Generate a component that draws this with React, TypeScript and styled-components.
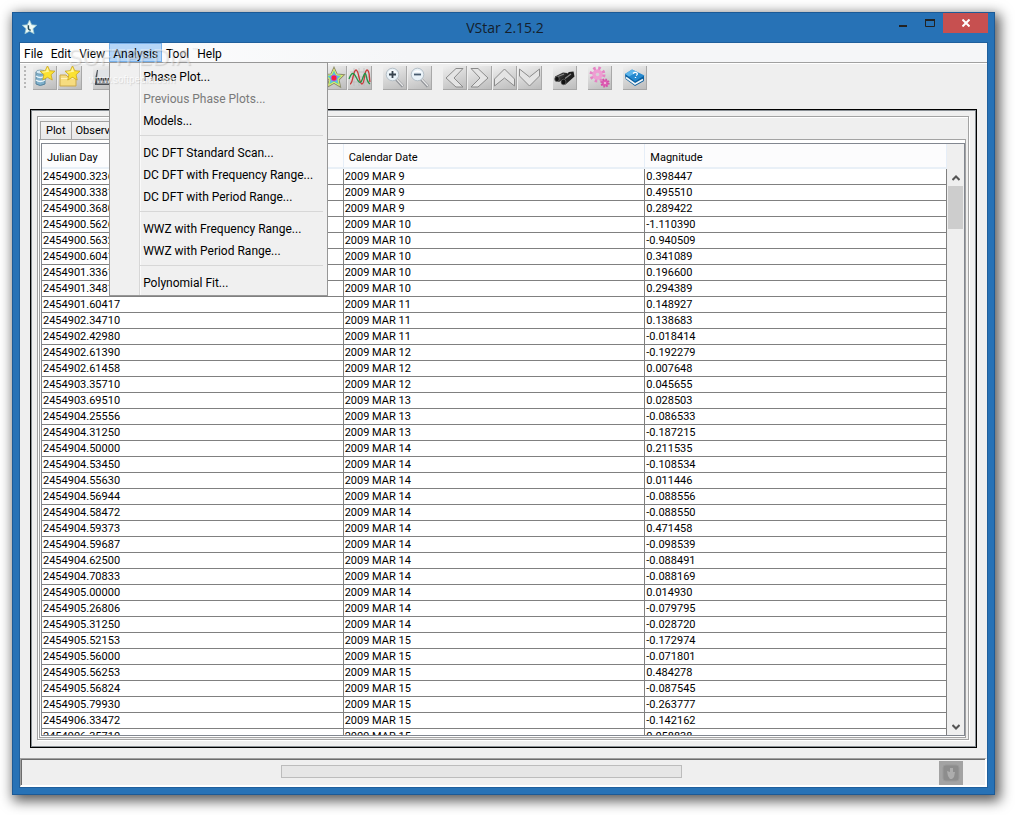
import React from "react";
import styled, { createGlobalStyle } from "styled-components";

const GlobalStyle = createGlobalStyle`
  *, *::before, *::after { box-sizing: border-box; }
  html, body { margin: 0; background: #fff; }
  body { font-family: Roboto, "Noto Sans", sans-serif; font-size: 12px; color: #000; }
  button { font: inherit; color: inherit; padding: 0; border: 0; background: none; }
`;

const Desktop = styled.div`
  display: flex;
  height: 100vh;
  min-height: 480px;
  padding: 12px 20px 20px 12px;
`;

const Window = styled.main`
  flex: 1;
  min-width: 0;
  display: flex;
  flex-direction: column;
  background: #2772b6;
  border: 1px solid #1c5a96;
  box-shadow: 3px 4px 12px 2px rgba(0, 0, 0, 0.65);
`;

const TitleBar = styled.header`
  display: grid;
  grid-template-columns: 1fr auto 1fr;
  height: 29px;
  padding: 0 6px 0 9px;
`;

const AppIcon = styled.svg`
  width: 15px;
  height: 15px;
  margin-top: 7px;
`;

const Title = styled.h1`
  margin: 0;
  font-family: "Open Sans", sans-serif;
  font-size: 14px;
  line-height: 30px;
  font-weight: 400;
  color: #14202c;
`;

const Controls = styled.div`
  display: flex;
  justify-content: flex-end;
`;

const ControlButton = styled.button<{ $close?: boolean }>`
  width: ${(p) => (p.$close ? 45 : 27)}px;
  height: 20px;
  display: flex;
  align-items: center;
  justify-content: center;
  background: ${(p) => (p.$close ? "#c75050" : "transparent")};
`;

const Client = styled.div`
  flex: 1;
  min-height: 0;
  margin: 0 6px 6px;
  border: 1px solid #1f5f9c;
  background: #efefef;
  display: flex;
  flex-direction: column;
`;

const MenuBar = styled.nav`
  position: relative;
  display: flex;
  height: 20px;
  background: linear-gradient(90deg, #fff, #f5f6f8 40%);
  border-bottom: 1px solid #a0a0a0;
  box-shadow: 0 1px 0 #fff;
`;

const MenuSlot = styled.div`
  position: relative;
  display: flex;
`;

const MenuTitle = styled.button<{ $open?: boolean }>`
  padding: 2px 4px 0;
  line-height: 18px;
  background: ${(p) => (p.$open ? "#b5d6f8" : "transparent")};
  box-shadow: ${(p) => (p.$open ? "inset 0 0 0 1px #77b0ea" : "none")};
`;

const Popup = styled.div`
  position: absolute;
  z-index: 2;
  top: 19px;
  left: 0;
  width: 219px;
  padding: 3px 0 1px;
  background: linear-gradient(90deg, transparent 29px, #d7d7d7 29px, #d7d7d7 30px, #fafafa 30px, #fafafa 31px, transparent 31px) #f0f0f0;
  border: 1px solid #979797;
`;

const PopupItem = styled.button`
  display: block;
  width: 100%;
  height: 22px;
  padding-left: 33px;
  text-align: left;
  white-space: nowrap;
  line-height: 22px;
  &:disabled { color: #7a7a7a; }
`;

const PopupRule = styled.hr`
  height: 1px;
  margin: 3px 4px 6px 30px;
  border: 0;
  background: #d7d7d7;
`;

const Watermark = styled.div`
  position: absolute;
  z-index: 3;
  top: 4px;
  left: 48px;
  pointer-events: none;
  font: 22px/22px "DejaVu Sans", sans-serif;
  color: rgba(255, 255, 255, 0.4);
  text-shadow: 1px 1px 1px rgba(90, 90, 90, 0.2);
  sup {
    font-size: 8px;
    line-height: 8px;
    vertical-align: top;
  }
`;

const WatermarkLink = styled.div`
  padding-left: 21px;
  font: 10px/22px "Liberation Sans", sans-serif;
  color: rgba(255, 255, 255, 0.8);
`;

const ToolBar = styled.div`
  display: flex;
  align-items: flex-start;
  gap: 1px;
  height: 46px;
  padding: 3px 0 0 4px;
`;

const Grip = styled.span`
  width: 2px;
  height: 24px;
  margin-right: 5px;
  background: repeating-linear-gradient(#b8b8b8 0 2px, transparent 2px 4px);
`;

const ToolGroup = styled.div`
  display: flex;
  gap: 1px;
  margin-right: 10px;
  &:first-of-type { margin-left: 1px; }
`;

const ToolButton = styled.button`
  width: 24px;
  height: 24px;
  background: linear-gradient(160deg, #efefef, #bcbcbc);
  border-right: 1px solid #a8a8a8;
  border-bottom: 1px solid #a8a8a8;
  svg { display: block; width: 23px; height: 23px; }
`;

const Frame = styled.section`
  flex: 1;
  min-height: 0;
  margin: 0 10px;
  border: 1px solid #000;
  background: #efefef;
  box-shadow: inset 0 0 0 1px #8a9095;
  padding: 6px;
  display: flex;
`;

const Etched = styled.div`
  flex: 1;
  min-width: 0;
  display: flex;
  flex-direction: column;
  border: 1px solid #a3a3a3;
  box-shadow: inset 1px 1px 0 #fff, 1px 1px 0 #fff;
  padding: 4px 2px 1px 1px;
  margin: 0 1px 1px 0;
`;

const Tabs = styled.div`
  display: flex;
  padding-left: 1px;
`;

const Tab = styled.button`
  height: 18px;
  padding: 0 5px;
  border: 1px solid #a3a3a3;
  border-bottom: 0;
  background: linear-gradient(#f3f3f3, #e8e8e8);
  font-size: 11px;
  line-height: 18px;
  & + & { border-left: 0; padding-left: 4px; }
`;

const TabPane = styled.div`
  flex: 1;
  min-height: 0;
  display: flex;
  padding: 3px 0 1px 1px;
  background: #fff;
  border: 1px solid #a3a3a3;
`;

const ScrollPane = styled.div`
  flex: 1;
  min-width: 0;
  display: flex;
  border: 1px solid #828790;
  background: #efefef;
`;

const Viewport = styled.div`
  flex: 1;
  min-width: 0;
  overflow: hidden;
  background: #fff;
`;

const DataTable = styled.table`
  width: 100%;
  table-layout: fixed;
  border-collapse: separate;
  border-spacing: 0;
  font-size: 11px;
  line-height: 15px;
  th {
    height: 25px;
    padding: 4px 4px 0 5px;
    text-align: left;
    font-weight: 400;
    background: #fcfcfd;
    border-right: 1px solid #e6eef8;
    border-bottom: 2px solid #e9f0f7;
  }
  td {
    height: 16px;
    padding: 0 1px;
    border-right: 1px solid #808080;
    border-bottom: 1px solid #808080;
  }
`;

const ScrollBar = styled.div`
  width: 17px;
  padding: 25px 0 0 1px;
  display: flex;
  flex-direction: column;
`;

const ScrollArrow = styled.button`
  height: 17px;
  display: flex;
  align-items: center;
  justify-content: center;
`;

const ScrollTrack = styled.div`
  flex: 1;
`;

const ScrollThumb = styled.div`
  height: 43px;
  margin-right: 1px;
  background: #cdcdcd;
`;

const StatusBar = styled.footer`
  display: flex;
  align-items: flex-start;
  height: 29px;
  margin-top: 10px;
  padding: 2px 22px 0 0;
  border: 2px solid #fff;
  border-top: 1px solid #a0a0a0;
  border-left: 1px solid #a0a0a0;
  box-shadow: inset 1px 1px 0 #6c6c6c;
`;

const ProgressSlot = styled.div`
  flex: 1;
  display: flex;
  justify-content: center;
  padding: 4px 0 0 3px;
`;

const Progress = styled.div`
  width: 401px;
  max-width: 60%;
  height: 13px;
  background: #e6e6e6;
  border: 1px solid #bcbcbc;
`;

const StopButton = styled.button`
  width: 24px;
  height: 24px;
  background: #a3a3a3;
  svg { display: block; }
`;

const STAR = "M0-10 2.9-3.6 9.6-3 4.6 1.6 6.1 8.4 0 4.9-6.1 8.4-4.6 1.6-9.6-3-2.9-3.6Z";

const GoldStar = () => (
  <g transform="translate(14.5 7.5) scale(.78)">
    <path d={STAR} fill="#fbe232" stroke="#c9a320" strokeWidth="1" />
    <path d="M0-8 2-2.4-6-1-7.5-2.4-2-2.8Z" fill="#fff6a0" />
  </g>
);

const Magnifier = () => (
  <>
    <path d="m13 13 7 7.500" stroke="#8e9196" strokeWidth="3" />
    <path d="m13 12.500 7 7.500" stroke="#e9e9e9" strokeWidth="1.200" />
    <circle cx="9.500" cy="8.500" r="6.300" fill="#e9f2f8" stroke="#b4bec6" />
    <path d="M5 7a5 5 0 0 1 9 0q-5-2-9 0Z" fill="#fff" />
  </>
);

const icons: Record<string, React.ReactNode> = {
  database: (
    <>
      <path d="M3 6v12q4 3 9 0V6" fill="#7fb0cb" stroke="#54819b" />
      <path d="M3 10q4 3 9 0M3 14q4 3 9 0" fill="none" stroke="#e9f5fb" strokeWidth="1.4" />
      <ellipse cx="7.500" cy="6" rx="4.500" ry="2" fill="#d5eaf4" stroke="#54819b" strokeWidth=".6" />
      <GoldStar />
    </>
  ),
  folder: (
    <>
      <path d="M2 20V9h6l2 2h8v9Z" fill="#f6dc80" stroke="#cba84a" />
      <path d="M3 12.500h14" stroke="#fff3bd" />
      <GoldStar />
    </>
  ),
  save: (
    <>
      <path d="M4 4h16l2 9v6H2v-6Z" fill="#4a4f55" />
      <path d="M5 4h14l1 8H4Z" fill="#dfe3e7" />
      <path d="M2 12h20v2H2Z" fill="#24282c" />
      <path d="M4 15h16v3H4Z" fill="#8c9196" />
    </>
  ),
  print: <path d="M5 4h13v5h3v8H2V9h3Z" fill="#f4f4f4" stroke="#555" />,
  info: <circle cx="11.500" cy="11.500" r="8" fill="#3f83c8" />,
  prefs: <path d="M4 18 18 4" stroke="#555" strokeWidth="3" />,
  plot: <path d="M3 19V3M3 19h17M6 14l4-5 4 3 4-7" fill="none" stroke="#2767a8" />,
  star: (
    <g transform="translate(11 12) scale(1.080)">
      <path d={STAR} fill="#f0c6d0" stroke="#8c8f6a" strokeWidth="1" />
      <path d={STAR} transform="scale(.88)" fill="#e3ee62" />
      <path d={STAR} transform="scale(.72)" fill="#63dd95" />
      <path d={STAR} transform="scale(.58)" fill="#5fb6f2" />
      <circle r="3" fill="#b45ad8" />
      <circle r="2.200" fill="#f8203a" />
    </g>
  ),
  curves: (
    <>
      <path d="M2 6h19M2 11h19M2 16h19M6 2v18M11 2v18M16 2v18" stroke="#b5b5b5" strokeWidth=".6" />
      <path d="M2 18C5 18 5 4 8 4s3 14 6 14 2-14 5-14 2 8 3 12" fill="none" stroke="#c83a3a" strokeWidth="1.300" />
      <path d="M1 13C4 5 6 7 8 11s4 8 6 3 3-9 4-5 1 7 4 9" fill="none" stroke="#239345" strokeWidth="1.300" />
    </>
  ),
  zoomIn: (
    <>
      <Magnifier />
      <path d="M6 8.500h7M9.500 5v7" stroke="#38434e" strokeWidth="1.800" />
    </>
  ),
  zoomOut: (
    <>
      <Magnifier />
      <path d="M6 8.500h7" stroke="#4a5d70" strokeWidth="1.800" />
    </>
  ),
  left: <path d="M20 2.500h-7l-10 9.500 10 9h7L11 12Z" fill="#e4e4e4" stroke="#8b8b8b" />,
  right: <path d="M3 2.500h7l10 9.500-10 9H3L12 12Z" fill="#e4e4e4" stroke="#8b8b8b" />,
  up: <path d="M1.500 20v-7L11.500 3l10 10v7l-10-8Z" fill="#e4e4e4" stroke="#8b8b8b" />,
  down: <path d="M1.500 3v7l10 10 10-10V3l-10 8Z" fill="#e4e4e4" stroke="#8b8b8b" />,
  binoculars: (
    <>
      <path d="M2 10.500 10 6.500 14 7v4l-8 5-4-2Z" fill="#2e2e2e" />
      <path d="M8 13 16 6l4.500-.5 1 5-9 8-4-1Z" fill="#1f1f1f" />
      <path d="m5 10.500 6-2.500M12 12.500l6-4.500" stroke="#8a8a8a" strokeWidth="1.200" />
      <ellipse cx="4" cy="13" rx="2.300" ry="2.600" fill="#111" stroke="#6a6a6a" strokeWidth=".7" />
      <ellipse cx="10.500" cy="16" rx="2.500" ry="2.800" fill="#111" stroke="#6a6a6a" strokeWidth=".7" />
    </>
  ),
  gears: (
    <>
      <circle cx="9.500" cy="8.500" r="6" fill="none" stroke="#e583c4" strokeWidth="4" strokeDasharray="2.300 2.412" />
      <circle cx="9.500" cy="8.500" r="5.200" fill="#ee9dd2" />
      <circle cx="9.500" cy="8.500" r="1.800" fill="#d8d0d6" />
      <circle cx="17" cy="17" r="3.500" fill="#dd60b4" stroke="#d44ea8" strokeWidth="2.200" strokeDasharray="1.400 1.349" />
      <circle cx="17" cy="17" r="1" fill="#f4cfe6" />
    </>
  ),
  book: (
    <>
      <path d="m2 8 .5 5 9.500 7 9-5v-5Z" fill="#0b5f9f" />
      <path d="m3 11.500 9 6.500 8-4.500" fill="none" stroke="#f2f6f8" strokeWidth="1.600" />
      <path d="m2 8 7-4.500 12.500 6L12 15.500Z" fill="#2589cf" />
      <path d="m2 8 7-4.500 5 2.500-8 4.500Z" fill="#5cb4ea" />
      <path d="M10 7.500q2-2 4-.5 1 1.500-1 2.500m-.5 1.500v1" fill="none" stroke="#fff" strokeWidth="1.300" />
    </>
  ),
};

const toolGroups: [string, string][][] = [
  [["database", "New star from database"], ["folder", "New star from file"]],
  [["save", "Save"], ["print", "Print"]],
  [["info", "Info"]],
  [["prefs", "Preferences"]],
  [["plot", "Raw plot"], ["plot", "Phase plot"], ["plot", "Observations"], ["plot", "Means"], ["star", "Star"], ["curves", "Models"]],
  [["zoomIn", "Zoom in"], ["zoomOut", "Zoom out"]],
  [["left", "Pan left"], ["right", "Pan right"], ["up", "Pan up"], ["down", "Pan down"]],
  [["binoculars", "Find"]],
  [["gears", "Plug-ins"]],
  [["book", "Help"]],
];

const analysisMenu: (string | null)[] = [
  "Phase Plot...", "Previous Phase Plots...", "Models...", null,
  "DC DFT Standard Scan...", "DC DFT with Frequency Range...", "DC DFT with Period Range...", null,
  "WWZ with Frequency Range...", "WWZ with Period Range...", null,
  "Polynomial Fit...",
];

const observations: [string, number, string][] = [
  ["2454900.32360", 9, "0.398447"], ["2454900.33810", 9, "0.495510"], ["2454900.36800", 9, "0.289422"],
  ["2454900.56260", 10, "-1.110390"], ["2454900.56320", 10, "-0.940509"], ["2454900.60410", 10, "0.341089"],
  ["2454901.33610", 10, "0.196600"], ["2454901.34810", 10, "0.294389"], ["2454901.60417", 11, "0.148927"],
  ["2454902.34710", 11, "0.138683"], ["2454902.42980", 11, "-0.018414"], ["2454902.61390", 12, "-0.192279"],
  ["2454902.61458", 12, "0.007648"], ["2454903.35710", 12, "0.045655"], ["2454903.69510", 13, "0.028503"],
  ["2454904.25556", 13, "-0.086533"], ["2454904.31250", 13, "-0.187215"], ["2454904.50000", 14, "0.211535"],
  ["2454904.53450", 14, "-0.108534"], ["2454904.55630", 14, "0.011446"], ["2454904.56944", 14, "-0.088556"],
  ["2454904.58472", 14, "-0.088550"], ["2454904.59373", 14, "0.471458"], ["2454904.59687", 14, "-0.098539"],
  ["2454904.62500", 14, "-0.088491"], ["2454904.70833", 14, "-0.088169"], ["2454905.00000", 14, "0.014930"],
  ["2454905.26806", 14, "-0.079795"], ["2454905.31250", 14, "-0.028720"], ["2454905.52153", 15, "-0.172974"],
  ["2454905.56000", 15, "-0.071801"], ["2454905.56253", 15, "0.484278"], ["2454905.56824", 15, "-0.087545"],
  ["2454905.79930", 15, "-0.263777"], ["2454906.33472", 15, "-0.142162"], ["2454906.35710", 15, "0.058838"],
];

export default function App() {
  return (
    <>
      <GlobalStyle />
      <Desktop>
        <Window>
          <TitleBar>
            <AppIcon viewBox="-10 -10 20 20" aria-hidden="true">
              <path d={STAR} fill="#eefaf6" stroke="#9cc9d0" />
              <path d="M-1.500-3v4q1 3 3 2" fill="none" stroke="#264c58" strokeWidth="2" />
            </AppIcon>
            <Title>VStar 2.15.2</Title>
            <Controls>
              <ControlButton aria-label="Minimize">
                <svg width="8" height="12"><path d="M0 9h8" stroke="#222" strokeWidth="2" /></svg>
              </ControlButton>
              <ControlButton aria-label="Maximize">
                <svg width="10" height="8"><path d="M.5 1v6.500h9V1" fill="none" stroke="#222" /><path d="M0 1h10" stroke="#222" strokeWidth="2" /></svg>
              </ControlButton>
              <ControlButton $close aria-label="Close">
                <svg width="8" height="8"><path d="m.5.5 7 7m0-7-7 7" stroke="#fff" strokeWidth="2" /></svg>
              </ControlButton>
            </Controls>
          </TitleBar>
          <Client>
            <MenuBar>
              {["File", "Edit", "View"].map((m) => <MenuTitle key={m}>{m}</MenuTitle>)}
              <MenuSlot>
                <MenuTitle $open aria-expanded="true">Analysis</MenuTitle>
                <Popup>
                  {analysisMenu.map((item, i) =>
                    item === null ? <PopupRule key={i} /> : (
                      <PopupItem key={i} disabled={item === "Previous Phase Plots..."}>{item}</PopupItem>
                    )
                  )}
                </Popup>
              </MenuSlot>
              {["Tool", "Help"].map((m) => <MenuTitle key={m}>{m}</MenuTitle>)}
              <Watermark>
                SOFTPEDIA<sup>™</sup>
                <WatermarkLink>www.softpedia.com</WatermarkLink>
              </Watermark>
            </MenuBar>
            <ToolBar>
              <Grip />
              {toolGroups.map((group, i) => (
                <ToolGroup key={i}>
                  {group.map(([icon, label]) => (
                    <ToolButton key={label} aria-label={label}>
                      <svg viewBox="0 0 23 23" aria-hidden="true">{icons[icon]}</svg>
                    </ToolButton>
                  ))}
                </ToolGroup>
              ))}
            </ToolBar>
            <Frame>
              <Etched>
                <Tabs>
                  {["Plot", "Observations", "Means"].map((t) => <Tab key={t}>{t}</Tab>)}
                </Tabs>
                <TabPane>
                  <ScrollPane>
                    <Viewport>
                      <DataTable>
                        <thead>
                          <tr><th>Julian Day</th><th>Calendar Date</th><th>Magnitude</th></tr>
                        </thead>
                        <tbody>
                          {observations.map(([jd, day, mag]) => (
                            <tr key={jd}><td>{jd}</td><td>2009 MAR {day}</td><td>{mag}</td></tr>
                          ))}
                        </tbody>
                      </DataTable>
                    </Viewport>
                    <ScrollBar>
                      <ScrollArrow aria-label="Scroll up">
                        <svg width="8" height="6"><path d="m.5 5 3.500-3.500L7.500 5" fill="none" stroke="#555" strokeWidth="2" /></svg>
                      </ScrollArrow>
                      <ScrollTrack><ScrollThumb /></ScrollTrack>
                      <ScrollArrow aria-label="Scroll down">
                        <svg width="8" height="6"><path d="m.5 1 3.500 3.500L7.500 1" fill="none" stroke="#555" strokeWidth="2" /></svg>
                      </ScrollArrow>
                    </ScrollBar>
                  </ScrollPane>
                </TabPane>
              </Etched>
            </Frame>
            <StatusBar>
              <ProgressSlot><Progress role="progressbar" aria-label="Progress" /></ProgressSlot>
              <StopButton aria-label="Stop">
                <svg width="24" height="24">
                  <rect x="4" y="4" width="16" height="16" rx="3" fill="#8d8d8d" stroke="#999" />
                  <path d="M8 10l3 1V7h3v4l2 0-1 5-2 2-2 0-2-3Z" fill="#adadad" />
                </svg>
              </StopButton>
            </StatusBar>
          </Client>
        </Window>
      </Desktop>
    </>
  );
}
